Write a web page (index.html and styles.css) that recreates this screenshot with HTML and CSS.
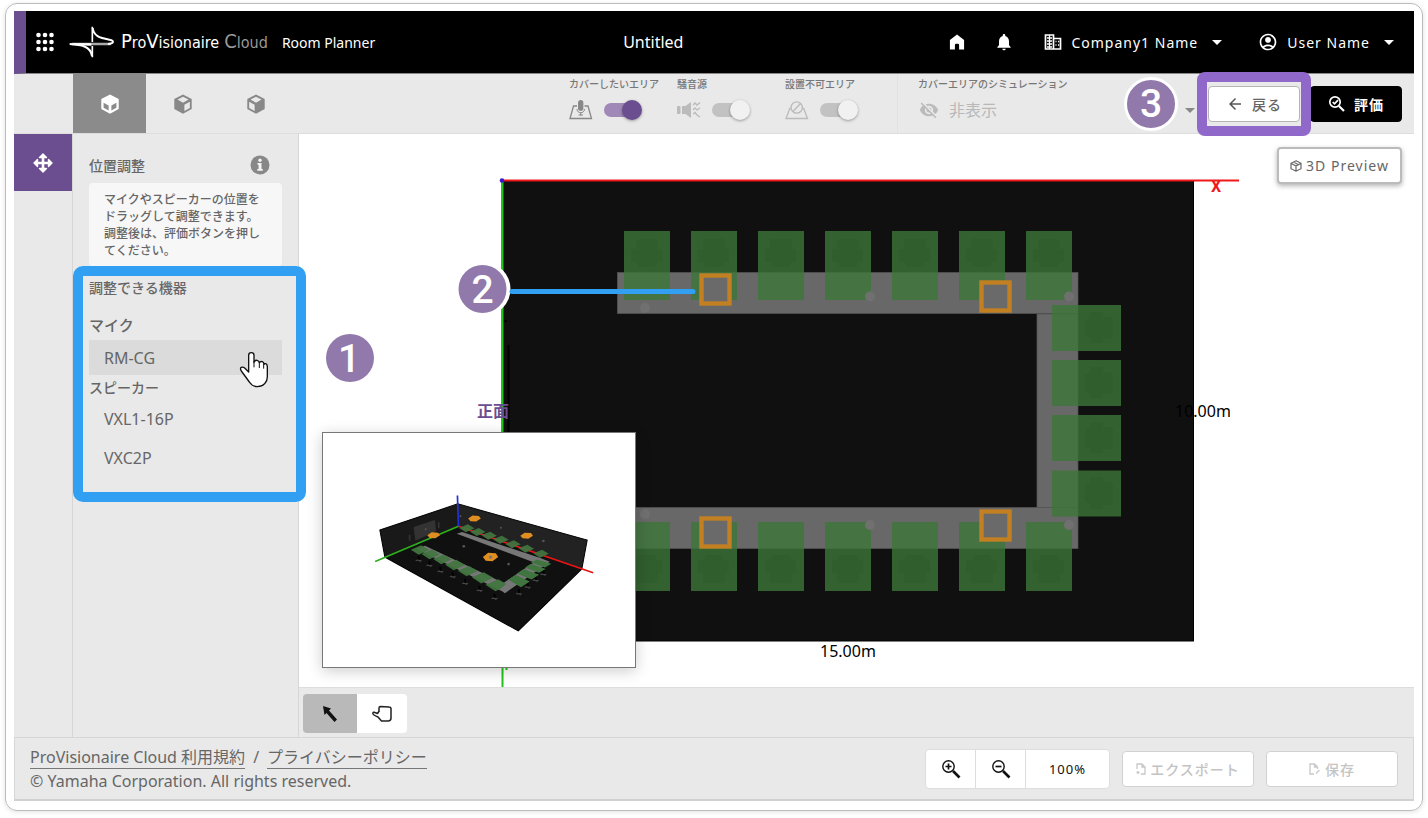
FILE: index.html
```html
<!DOCTYPE html>
<html lang="ja">
<head>
<meta charset="utf-8">
<title>ProVisionaire Cloud Room Planner</title>
<link rel="stylesheet" href="styles.css">
</head>
<body>
<div class="frame">
<div class="app">
  <header class="topbar">
    <button class="icon-btn apps" aria-label="Apps">
      <svg width="18" height="20" viewBox="0 0 18 20" fill="#fff"><circle cx="2.500" cy="3" r="2.300"/><circle cx="9" cy="3" r="2.300"/><circle cx="15.500" cy="3" r="2.300"/><circle cx="2.500" cy="10" r="2.300"/><circle cx="9" cy="10" r="2.300"/><circle cx="15.500" cy="10" r="2.300"/><circle cx="2.500" cy="17" r="2.300"/><circle cx="9" cy="17" r="2.300"/><circle cx="15.500" cy="17" r="2.300"/></svg>
    </button>
    <div class="brand">
      <svg width="46" height="32" viewBox="205 78 138 96" fill="none"><path d="M214 132H330" stroke="#aaa" stroke-width="7"/><path d="M276 84C279 108 296 113 326 119C341 122 341 130 322 132M207 132C240 134 270 138 274 168" stroke="#fff" stroke-width="6"/><path d="M275 80V126M275 138V172" stroke="#fff" stroke-width="5"/><path d="M206 129L272 130V137L240 136z" fill="#fff"/></svg>
      <span class="wordmark"><span class="big">P</span>ro<span class="big">V</span>isionaire</span>
      <span class="wordmark cloud"><span class="big">C</span>loud</span>
    </div>
    <span class="product">Room Planner</span>
    <h1 class="doc-title">Untitled</h1>
    <nav class="account">
      <button class="icon-btn" aria-label="Home"><svg width="20" height="20" viewBox="0 0 24 24" fill="#fff"><path d="M3.500 21V9.500L12 3l8.500 6.500V21H14.500v-5.500a1.500 1.500 0 0 0-1.500-1.500h-2a1.500 1.500 0 0 0-1.500 1.500V21z"/></svg></button>
      <button class="icon-btn bell" aria-label="Notifications"><svg width="20" height="20" viewBox="0 0 24 24" fill="#fff"><path d="M12 22c1.100 0 2-.9 2-2h-4c0 1.100.89 2 2 2zm6-6v-5c0-3.070-1.640-5.640-4.500-6.320V4c0-.83-.67-1.500-1.500-1.500s-1.500.67-1.500 1.500v.68C7.630 5.360 6 7.920 6 11v5l-2 2v1h16v-1l-2-2z"/></svg></button>
      <button class="menu-btn"><svg width="18" height="18" viewBox="0 0 18 18" fill="none" stroke="#fff" stroke-width="1.700"><path d="M1.500 2h8v14h-8zM9.500 5.500h7V16h-7"/><path d="M3 5h5M3 8h5M3 11h5M3 14h5M11.500 8.500h1M14 8.500h1.200M11.500 12h1M14 12h1.200M5.500 2v14" stroke-width="1.300"/></svg><span>Company1 Name</span><i class="caret"></i></button>
      <button class="menu-btn user"><svg width="20" height="20" viewBox="0 0 24 24" fill="#fff"><path d="M12 2C6.480 2 2 6.480 2 12s4.480 10 10 10 10-4.480 10-10S17.520 2 12 2zM7.350 18.500C8.660 17.560 10.260 17 12 17s3.340.56 4.650 1.500C15.340 19.440 13.740 20 12 20s-3.340-.56-4.650-1.500zm10.790-1.380C16.450 15.800 14.320 15 12 15s-4.450.8-6.140 2.120C4.700 15.730 4 13.950 4 12c0-4.420 3.580-8 8-8s8 3.580 8 8c0 1.950-.7 3.730-1.860 5.120zM12 6c-1.930 0-3.500 1.570-3.500 3.500S10.070 13 12 13s3.500-1.570 3.500-3.500S13.930 6 12 6z"/></svg><span>User Name</span><i class="caret"></i></button>
    </nav>
  </header>

  <div class="toolbar">
    <div class="views">
      <button class="view active" aria-label="Top view"><svg width="22" height="22" viewBox="0 0 24 24" fill="#fff" fill-rule="evenodd"><path d="M12 1.500 21.500 6.500v11L12 22.500 2.500 17.500v-11zM5 10.500v5.500l5.500 3v-5.500zM19 10.500v5.500l-5.500 3v-5.500z"/></svg></button>
      <button class="view" aria-label="Left view"><svg width="22" height="22" viewBox="0 0 24 24" fill="#888" fill-rule="evenodd"><path d="M12 1.500 21.500 6.500v11L12 22.500 2.500 17.500v-11zM12 4 18 7.200 12 10.500 6 7.200zM19.500 9.500v6.800l-6 3.200v-6.800z"/></svg></button>
      <button class="view" aria-label="Right view"><svg width="22" height="22" viewBox="0 0 24 24" fill="#888" fill-rule="evenodd"><path d="M12 1.500 21.500 6.500v11L12 22.500 2.500 17.500v-11zM12 4 18 7.200 12 10.500 6 7.200zM4.500 9.500v6.800l6 3.200v-6.800z"/></svg></button>
    </div>
    <div class="layers">
      <div class="layer">
        <label for="cover">カバーしたいエリア</label>
        <div class="layer-row"><svg width="24" height="20" viewBox="0 0 24 20" fill="none" stroke="#888" stroke-width="1.300"><path d="M8 6H4.500L1 18.500H22.500L19 6H15.500"/><rect x="9.700" y=".7" width="4" height="9.500" rx="2" fill="#888"/><path d="M8 9c0 5 7.500 5 7.500 0M11.700 12.500v3M9.500 15h4.500" stroke-width="1"/></svg><input class="switch" type="checkbox" id="cover" checked></div>
      </div>
      <div class="layer">
        <label for="noise">騒音源</label>
        <div class="layer-row"><svg width="24" height="20" viewBox="0 0 24 20" fill="#bbb"><rect x="0" y="6" width="3.500" height="8" rx="1"/><path d="M5 6h3.500L14 2v16L8.500 14H5z"/><path d="M16 5l2-2 2 2 3-2.500M16 10l2-2 2 2 3-2M16 14l2-1.500 2 2.500 3 2" fill="none" stroke="#bbb" stroke-width="1.300"/></svg><input class="switch" type="checkbox" id="noise"></div>
      </div>
      <div class="layer">
        <label for="keepout">設置不可エリア</label>
        <div class="layer-row"><svg width="24" height="20" viewBox="0 0 24 20" fill="none" stroke="#bbb" stroke-width="1.300"><path d="M6 8.500H4.800L1 18.500H22.500L18.700 8.500H17.500"/><circle cx="11.700" cy="7.500" r="5.700"/><path d="M8 11.500l7.500-8"/></svg><input class="switch" type="checkbox" id="keepout"></div>
      </div>
    </div>
    <div class="simulation">
      <label for="sim">カバーエリアのシミュレーション</label>
      <div class="layer-row"><svg width="22" height="20" viewBox="0 0 24 24" fill="#bbb"><path d="M12 7c2.760 0 5 2.240 5 5 0 .65-.13 1.260-.36 1.830l2.920 2.920c1.510-1.260 2.700-2.890 3.430-4.750-1.730-4.390-6-7.500-11-7.500-1.400 0-2.740.25-3.980.7l2.160 2.160C10.740 7.130 11.350 7 12 7zM2 4.270l2.280 2.280.46.46C3.080 8.300 1.780 10.020 1 12c1.730 4.390 6 7.500 11 7.500 1.550 0 3.030-.3 4.380-.84l.42.42L19.730 22 21 20.730 3.270 3 2 4.270zM7.530 9.800l1.550 1.550c-.05.21-.08.43-.08.65 0 1.660 1.340 3 3 3 .22 0 .44-.03.65-.08l1.550 1.550c-.67.33-1.410.53-2.200.53-2.760 0-5-2.240-5-5 0-.79.2-1.530.53-2.200zm4.310-.78l3.150 3.150.02-.16c0-1.660-1.340-3-3-3l-.17.01z"/></svg>
        <select id="sim"><option>非表示</option></select><i class="caret dark"></i></div>
      <span class="badge">3</span>
    </div>
    <div class="actions">
      <div class="callout-back"><button class="btn"><svg width="18" height="18" viewBox="0 0 24 24" fill="#555"><path d="M20 11H7.830l5.590-5.590L12 4l-8 8 8 8 1.410-1.410L7.830 13H20v-2z"/></svg>戻る</button></div>
      <button class="btn primary"><svg width="18" height="18" viewBox="0 0 18 18" fill="none" stroke="#fff" stroke-width="1.700"><circle cx="7" cy="7" r="5.200"/><path d="M11 11l5 5" stroke-width="2.200"/><path d="M4.700 7l1.800 1.800L10 5.200"/></svg>評価</button>
    </div>
  </div>

  <div class="workspace">
    <div class="rail"><button class="rail-btn" aria-label="位置調整"><svg width="20" height="20" viewBox="0 0 20 20" fill="none" stroke="#fff" stroke-width="1.400" stroke-linejoin="round"><path d="M10 2v16M2 10h16" stroke-width="2.600"/><path d="M6.500 4.500l3.500-3.500 3.500 3.500zM6.500 15.500l3.500 3.500 3.500-3.500zM4.500 6.500l-3.500 3.500 3.500 3.500zM15.500 6.500l3.500 3.500-3.500 3.500z" fill="#fff"/></svg></button></div>
    <aside class="panel">
      <div class="panel-head"><h2>位置調整</h2><svg width="20" height="20" viewBox="0 0 20 20"><circle cx="10" cy="10" r="9.500" fill="#888"/><circle cx="10" cy="5.200" r="1.700" fill="#f4f4f4"/><path d="M7.500 8h4v6h1.300v1.700H7.300V14h1.300V9.700H7.500z" fill="#f4f4f4"/></svg></div>
      <p class="hint">マイクやスピーカーの位置をドラッグして調整できます。調整後は、評価ボタンを押してください。</p>
      <section class="devices">
        <h3>調整できる機器</h3>
        <h4 class="mic">マイク</h4>
        <button class="device hover">RM-CG</button>
        <h4>スピーカー</h4>
        <button class="device">VXL1-16P</button>
        <button class="device">VXC2P</button>
        <svg class="pointer" width="30" height="38" viewBox="715 664 90 114"><path d="M744 727V677q0-8 8-8t8 8v21q2-7 9-6 6 1 7 7 3-5 9-3 5 2 5 8 4-4 8 0 2 3 2 8v30q0 12-8 20-8 9-22 9-16-1-24-14l-24-33q-5-8 0-11 5-2 10 2z" fill="#fff" stroke="#111" stroke-width="4" stroke-linejoin="round"/><path d="M760 695v18M776 697v18M789 703v14" stroke="#111" stroke-width="3"/></svg>
      </section>
    </aside>

    <main class="stage">
      <div class="canvas">
        <svg class="plan" viewBox="299 134 1115 553">
          <defs>
            <g id="seat"><rect width="46" height="69" fill="#3c7538" fill-opacity=".8"/><path d="M12 12q0-4 4-4h14q4 0 4 4v6h4v13h-5q-1 5-4 5H17q-3 0-4-5H7V18h5z" fill="#2f5c2c" fill-opacity=".6"/></g>
            <g id="spk"><rect x="2.500" y="2.500" width="28" height="28" fill="#6a6a6a" stroke="#c28022" stroke-width="4.400"/></g>
          </defs>
          <rect x="502" y="181" width="691.500" height="460" fill="#101010" stroke="#000"/>
          <path d="M508.500 345v100M503 321h4" stroke="#000" stroke-width="2"/>
          <g fill="#686868" stroke="#555" stroke-width=".7"><rect x="1037" y="314" width="41" height="193.500"/><rect x="617.500" y="272.500" width="460.500" height="41"/><rect x="617.500" y="507.500" width="460.500" height="41"/></g>
          <g><use href="#seat" x="624" y="231"/><use href="#seat" x="691" y="231"/><use href="#seat" x="758" y="231"/><use href="#seat" x="825" y="231"/><use href="#seat" x="892" y="231"/><use href="#seat" x="959" y="231"/><use href="#seat" x="1026" y="231"/></g>
          <g transform="matrix(1 0 0 -1 0 822)"><use href="#seat" x="624" y="231"/><use href="#seat" x="691" y="231"/><use href="#seat" x="758" y="231"/><use href="#seat" x="825" y="231"/><use href="#seat" x="892" y="231"/><use href="#seat" x="959" y="231"/><use href="#seat" x="1026" y="231"/></g>
          <g><use href="#seat" transform="translate(1121 305) rotate(90)"/><use href="#seat" transform="translate(1121 360) rotate(90)"/><use href="#seat" transform="translate(1121 415) rotate(90)"/><use href="#seat" transform="translate(1121 470.500) rotate(90)"/></g>
          <g fill="#707070"><circle cx="870" cy="296.500" r="5"/><circle cx="1069" cy="296.500" r="5"/><circle cx="645" cy="308" r="5"/><circle cx="870" cy="525" r="5"/><circle cx="1069" cy="525" r="5"/><circle cx="645" cy="514" r="5"/></g>
          <use href="#spk" x="699" y="273"/><use href="#spk" x="979" y="280"/><use href="#spk" x="979" y="509"/><use href="#spk" x="699" y="516"/>
          <path d="M502.500 181v506M506.500 667v3" stroke="#22c41a" stroke-width="2"/>
          <path d="M502 180.500h737" stroke="#f01818" stroke-width="2"/>
          <circle cx="502" cy="180.500" r="2.300" fill="#3a18d0"/>
          <text class="axis" x="1211" y="192">X</text>
          <text class="front" x="477" y="417">正面</text>
          <text class="dim" x="1175" y="417">10.00m</text>
          <text class="dim" x="820" y="657">15.00m</text>
          <circle cx="483.500" cy="289" r="27" fill="#fff"/><circle cx="482.500" cy="289" r="24" fill="#9179ab"/>
          <text class="num" x="482.500" y="303">2</text>
          <path d="M512 291.500H693" stroke="#31a0f2" stroke-width="5" stroke-linecap="round"/>
          <circle cx="350" cy="358" r="24" fill="#9179ab"/><text class="num" x="349" y="372">1</text>
        </svg>
        <button class="btn preview-btn"><svg width="12" height="12" viewBox="0 0 12 12" fill="none" stroke="#666" stroke-width="1.200"><path d="M6 .8 11 3.300v5.400L6 11.200 1 8.700V3.300zM1 3.300 6 6l5-2.700M6 6v5M3.500 2l5 2.700"/></svg>3D Preview</button>
        <div class="preview">
          <svg viewBox="40 41 933 699">
            <defs><path id="q" d="M-23-1 3-12 23 0-3 12z" fill="#417540" fill-opacity=".93"/><path id="o" d="M-19 0-6-9 13-8 19 0 5 9-12 8z" fill="#df8e22"/><g id="f"><path d="M-9 0h18M-5-3 6 4" stroke="#444" stroke-width="3"/><path d="M0-14V-3" stroke="#000" stroke-width="6"/></g></defs>
            <path d="M210 331 443 253 445 320 225 412z" fill="#191919"/><path d="M443 253 830 361 814 448 445 320z" fill="#222"/><path d="M445 320 814 448 624 633 225 412z" fill="#101010"/>
            <path d="M210 331 443 253 830 361 814 448 624 633 225 412z" fill="none" stroke="#000" stroke-width="3"/>
            <path d="M312 323 374 302 377 335 317 362z" fill="#333" stroke="#444"/><path d="M299 345v18M386 308v18" stroke="#333" stroke-width="5"/>
            <g fill="#555"><circle cx="347" cy="329" r="3"/><circle cx="451" cy="290" r="3"/><circle cx="572" cy="324" r="3"/><circle cx="699" cy="364" r="4"/><circle cx="461" cy="380" r="4"/><circle cx="595" cy="433" r="4"/></g>
            <path d="M445 320 848 459" stroke="#e81414" stroke-width="5"/><path d="M445 320 196 425" stroke="#2dae1c" stroke-width="5"/><path d="M445 320 442 228" stroke="#2030d8" stroke-width="5"/>
            <g><use href="#q" x="470" y="326"/><use href="#q" x="503" y="337"/><use href="#q" x="537" y="348"/><use href="#q" x="572" y="360"/><use href="#q" x="608" y="374"/><use href="#q" x="648" y="387"/><use href="#q" x="692" y="402"/></g>
            <path d="M440 342 456 337 690 415 672 428zM320 388 345 378 590 494 583 518zM690 415 718 426 584 520 560 503z" fill="#777"/>
            <g><use href="#f" x="326" y="422"/><use href="#f" x="358" y="437"/><use href="#f" x="391" y="455"/><use href="#f" x="428" y="471"/><use href="#f" x="465" y="491"/><use href="#f" x="508" y="512"/><use href="#f" x="553" y="536"/><use href="#f" x="626" y="522"/><use href="#f" x="652" y="502"/><use href="#f" x="676" y="482"/><use href="#f" x="699" y="464"/></g>
            <g><use href="#q" transform="translate(330 391) scale(1.200)"/><use href="#q" transform="translate(362 404) scale(1.200)"/><use href="#q" transform="translate(397 419) scale(1.200)"/><use href="#q" transform="translate(435 436) scale(1.300)"/><use href="#q" transform="translate(473 454) scale(1.300)"/><use href="#q" transform="translate(517 474) scale(1.400)"/><use href="#q" transform="translate(560 496) scale(1.500)"/></g>
            <path d="M662 428 680 419 723 432 704 443zM644 443 662 432 706 448 686 459zM620 461 640 448 686 465 664 479zM594 480 616 465 658 485 632 502z" fill="#417540"/>
            <path d="M570 508 590 490 606 500 586 519z" fill="#777"/>
            <use href="#o" x="493" y="297"/><use href="#o" x="371" y="347"/><use href="#o" x="649" y="348"/><use href="#o" transform="translate(541 412) scale(1.200 1.400)"/><circle cx="541" cy="412" r="5" fill="#777"/>
          </svg>
        </div>
      </div>
      <div class="tools">
        <button class="tool selected" aria-label="選択"><svg width="20" height="20" viewBox="0 0 20 20"><path d="M3 2 11 4.500 9 6.500 17 15.500 14.500 18 6.500 9 4.500 11z" fill="#111"/></svg></button>
        <button class="tool" aria-label="移動"><svg width="20" height="18" viewBox="0 0 20 18" fill="none" stroke="#222" stroke-width="1.500" stroke-linejoin="round"><path d="M7 6V3q0-1.500 1.500-1.500L17 2q2 0 2 2v9q0 3-3 3H9.500L6 12Q1 10 .8 8.500 1 6.500 3 7.500L5.500 8.500 7.500 5.500"/></svg></button>
      </div>
    </main>
  </div>

  <footer class="footer">
    <div class="legal">
      <div><a href="#">ProVisionaire Cloud 利用規約</a><span class="slash">/</span><a href="#">プライバシーポリシー</a></div>
      <div>© Yamaha Corporation. All rights reserved.</div>
    </div>
    <div class="zoom">
      <button aria-label="拡大"><svg width="20" height="20" viewBox="0 0 20 20" fill="none" stroke="#111"><circle cx="7.500" cy="7.500" r="5.700" stroke-width="1.400"/><path d="M12 12l6.500 6.500" stroke-width="2.600"/><path d="M4.500 7.500h6M7.500 4.500v6" stroke-width="1.700"/></svg></button>
      <button aria-label="縮小"><svg width="20" height="20" viewBox="0 0 20 20" fill="none" stroke="#111"><circle cx="7.500" cy="7.500" r="5.700" stroke-width="1.400"/><path d="M12 12l6.500 6.500" stroke-width="2.600"/><path d="M4.500 7.500h6" stroke-width="1.700"/></svg></button>
      <button class="level">100%</button>
    </div>
    <button class="btn faded" disabled><svg width="10" height="12" viewBox="0 0 10 12" fill="none" stroke="#c8c8c8" stroke-width="1.300"><path d="M1 6V1h5l3 3v7H5M6 1v3h3M.5 9.500h3M2 8v3"/></svg>エクスポート</button>
    <button class="btn faded" disabled><svg width="12" height="12" viewBox="0 0 12 12" fill="none" stroke="#c8c8c8" stroke-width="1.300"><path d="M5 11H1V1h4.500l3 3v2M5.500 1v3h3M7 10.500 10.500 7"/></svg>保存</button>
  </footer>
</div>
</div>
</body>
</html>
```
FILE: styles.css
```css
* { box-sizing: border-box; }
body {
  margin: 0;
  background: #fff;
  color: #666;
  font-family: "Noto Sans", "Noto Sans CJK JP", sans-serif;
  font-size: 14px;
}
button, select { font: inherit; color: inherit; border: 0; background: none; padding: 0; margin: 0; }
h1, h2, h3, h4, p { margin: 0; font-weight: 500; font-size: 14px; }
svg { display: block; flex: none; }

.frame {
  display: flex;
  min-height: calc(100vh - 10px);
  margin: 3px 5px 7px;
  padding: 7px 8px 9px;
  border: 1px solid #bbb;
  border-radius: 12px;
  box-shadow: 0 1px 5px rgba(0, 0, 0, .12);
}
.app { flex: 1; min-width: 0; display: flex; flex-direction: column; background: #e9e9e9; }

.topbar {
  display: flex;
  align-items: center;
  height: 63px;
  padding: 0 20px 0 10px;
  border-left: 12px solid #6b4e8f;
  border-bottom: 1px solid #888;
  background: #000;
  color: #fff;
}
.brand { display: flex; align-items: center; margin-left: 15px; }
.wordmark { margin-left: 6px; font-family: "DejaVu Sans Condensed", "Noto Sans", sans-serif; font-size: 16px; line-height: 24px; }
.wordmark .big { font-size: 20px; }
.cloud { margin-left: 5px; color: #999; }
.product { margin-left: 14px; }
.doc-title { flex: 1; padding-right: 16px; text-align: center; font-size: 16px; font-weight: 400; }
.account { display: flex; align-items: center; }
.bell { margin-left: 27px; }
.menu-btn { display: flex; align-items: center; gap: 9px; margin-left: 30px; letter-spacing: 1px; }
.menu-btn.user { margin-left: 36px; }
.caret { width: 0; border: 5px solid transparent; border-top-color: #fff; border-bottom: 0; margin-left: 5px; }
.caret.dark { border-top-color: #888; }

.toolbar { display: flex; height: 60px; padding: 0 12px 0 59px; border-bottom: 1px solid #ddd; }
.views { display: flex; flex: 1; }
.view { width: 73px; display: grid; place-items: center; }
.view.active { background: #8b8b8b; }
.layers { display: flex; border-right: 1px solid #e2e2e2; }
.layer { width: 108px; }
.layer:last-child { width: 112px; }
.layer label, .simulation label { display: block; padding-top: 3px; font-size: 10px; line-height: 15px; font-weight: 500; color: #777; }
.layer-row { display: flex; align-items: center; height: 36px; }
.switch { appearance: none; position: relative; width: 36px; height: 14px; margin: 0 0 0 11px; border-radius: 7px; background: #c2c2c2; }
.switch::after { content: ""; position: absolute; top: -3px; left: 18px; width: 20px; height: 20px; border-radius: 50%; background: #f1f1f1; box-shadow: 0 1px 3px rgba(0, 0, 0, .35); }
.switch:checked { background: #a089b8; }
.switch:checked::after { background: #6b4e8f; }
.simulation { position: relative; width: 300px; padding-left: 20px; color: #b8b8b8; }
.simulation select { flex: 1; appearance: none; margin-left: 9px; font-size: 16px; }
.simulation .caret { margin-right: 3px; }
.badge { position: absolute; left: 226px; top: 3px; width: 54px; height: 54px; border: 3px solid #fff; border-radius: 50%; background: #9179ab; color: #fff; font: 500 39px/48px Roboto, sans-serif; text-align: center; }

.actions { display: flex; align-items: flex-start; gap: 10px; padding-top: 12px; margin-left: 10px; }
.btn { display: flex; align-items: center; justify-content: center; gap: 8px; height: 36px; min-width: 92px; border: 1px solid #b5b5b5; border-radius: 4px; background: #fff; font-weight: 500; letter-spacing: 1px; }
.primary { border-color: #000; background: #000; color: #fff; font-weight: 700; }
.callout-back { position: relative; z-index: 2; }
.callout-back::after { content: ""; position: absolute; inset: -14px -11px; border: 10px solid #8f68c9; border-radius: 8px; pointer-events: none; }

.workspace { flex: 1; display: flex; min-height: 0; }
.rail { width: 59px; border-right: 1px solid #d6d6d6; }
.rail-btn { width: 100%; height: 57px; display: grid; place-items: center; background: #6b4e8f; }
.panel { width: 226px; padding: 0 16px; border-right: 1px solid #d6d6d6; }
.panel-head { display: flex; align-items: center; justify-content: space-between; height: 49px; padding: 13px 12px 0 0; }
.hint { padding: 8px 15px 7px; border-radius: 4px; background: #f7f7f7; font-size: 12px; line-height: 17px; line-break: anywhere; }
.devices { position: relative; z-index: 1; display: flex; flex-direction: column; padding: 10px 0 21px; }
.devices::before { content: ""; position: absolute; inset: 0 -24px -2px -16px; border: 10px solid #31a0f2; border-radius: 10px; pointer-events: none; }
.devices h3 { line-height: 24px; }
.devices h4 { line-height: 26px; }
.devices .mic { font-size: 15px; padding: 12px 0 2px; }
.device { height: 35px; margin-bottom: 4px; padding-left: 15px; text-align: left; font-size: 16px; }
.device.hover { margin-bottom: 0; background: #dbdbdb; }
.pointer { position: absolute; left: 150px; top: 85px; }

.stage { flex: 1; min-width: 0; display: flex; flex-direction: column; }
.canvas { position: relative; flex: 1; min-height: 0; background: #fff; }
.plan { width: 100%; height: auto; }
.axis { fill: #f01818; font: 700 16px Roboto, sans-serif; }
.front { fill: #6b4e8f; font: 700 16px "Noto Sans CJK JP", sans-serif; }
.dim { fill: #000; font: 16px "Noto Sans", sans-serif; }
.num { fill: #fff; font: 500 39px Roboto, sans-serif; text-anchor: middle; }
.preview-btn { position: absolute; top: 13px; right: 12px; gap: 4px; width: 125px; height: 37px; border: 2px solid #bbb; box-shadow: 0 2px 5px rgba(0, 0, 0, .3); font-weight: 400; }
.preview { position: absolute; left: 23px; bottom: 19px; width: 314px; border: 1px solid #777; background: #fff; box-shadow: 0 3px 14px rgba(0, 0, 0, .2); }
.preview svg { width: 100%; }
.tools { display: flex; height: 50px; padding: 6px 4px; border-top: 1px solid #ddd; }
.tool { width: 50px; height: 39px; display: grid; place-items: center; background: #fff; border-radius: 0 4px 4px 0; }
.tool.selected { width: 54px; background: #b9b9b9; border-radius: 4px 0 0 4px; }

.footer { display: flex; align-items: center; gap: 12px; height: 64px; padding: 0 15px; border: 1px solid #d6d6d6; border-bottom: 2px solid #d0d0d0; }
.legal { flex: 1; font-size: 16px; line-height: 24px; }
.legal a { color: inherit; text-decoration: none; border-bottom: 1px solid #777; }
.slash { margin: 0 8px; }
.zoom { display: flex; height: 40px; border: 1px solid #ddd; border-radius: 4px; background: #fff; overflow: hidden; }
.zoom button { width: 50px; display: grid; place-items: center; border-right: 1px solid #ddd; }
.zoom .level { width: 83px; border: 0; color: #111; letter-spacing: 1px; font-size: 13px; }
.faded { width: 132px; gap: 4px; border-color: #d2d2d2; color: #c4c4c4; }
```
